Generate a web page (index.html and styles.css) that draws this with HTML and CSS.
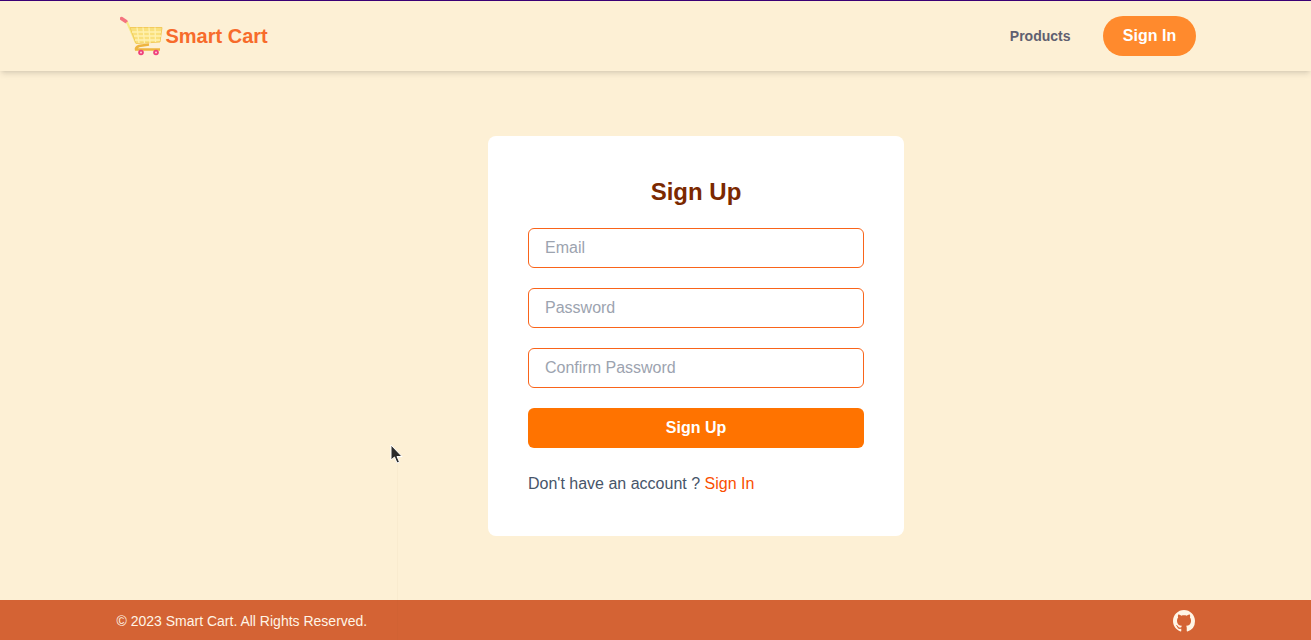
FILE: index.html
```html
<!DOCTYPE html>
<html lang="en">
<head>
    <meta charset="UTF-8">
    <title>Smart Cart</title>
    <link rel="stylesheet" href="styles.css">
</head>
<body>

    <!-- Navigation Bar -->
    <header class="navbar">
        <div class="navbar-inner">
            <a class="logo" href="#">
                <svg class="logo-icon" width="46" height="42" viewBox="0 0 46 42">
                    <path d="M1.500 3.500 L6 6.500" stroke="#f4737f" stroke-width="3.500" stroke-linecap="round"/>
                    <path d="M7 7 L16 28" stroke="#f7ec86" stroke-width="2" fill="none"/>
                    <path d="M10 12.500 L42 12.500 L40 27 L16 28.500 Z" fill="#f9e07c" stroke="#f3cb5c" stroke-width="1"/>
                    <path d="M12 17 H41 M14 21 H41 M15 25 H40 M17 12.500 L19 28 M23 12.500 L24.500 28 M29 12.500 L30 28 M35 12.500 L35.500 27" stroke="#fff1b0" stroke-width="1.300"/>
                    <path d="M29 29.500 L19 31 Q15.500 32.500 16 34.500 H40" stroke="#eeb53f" stroke-width="2.500" fill="none"/>
                    <circle cx="21" cy="37.500" r="2.800" fill="#ef3f7a"/>
                    <circle cx="36" cy="37.500" r="2.800" fill="#ef3f7a"/>
                    <circle cx="21" cy="37.500" r="1" fill="#fbd3dc"/>
                    <circle cx="36" cy="37.500" r="1" fill="#fbd3dc"/>
                </svg>
                <span>Smart Cart</span>
            </a>
            <nav class="navbar-links">
                <a class="nav-link" href="#">Products</a>
                <a class="nav-button" href="#">Sign In</a>
            </nav>
        </div>
    </header>

    <!-- Sign up card -->
    <main class="main">
        <form class="card">
            <h1>Sign Up</h1>
            <input class="field" type="email" placeholder="Email">
            <input class="field" type="password" placeholder="Password">
            <input class="field" type="password" placeholder="Confirm Password">
            <button class="submit" type="button">Sign Up</button>
            <p class="switch">Don't have an account ? <a href="#">Sign In</a></p>
        </form>
    </main>

    <footer class="footer">
        <div class="footer-inner">
            <p>© 2023 Smart Cart. All Rights Reserved.</p>
            <a class="github" href="#" aria-label="GitHub">
                <svg width="22" height="22" viewBox="0 0 16 16" fill="#fff5e6">
                    <path d="M8 0C3.580 0 0 3.580 0 8c0 3.540 2.290 6.530 5.470 7.590.4.070.55-.17.55-.38 0-.19-.01-.82-.01-1.490-2.010.37-2.530-.49-2.690-.94-.09-.23-.48-.94-.82-1.130-.28-.15-.68-.52-.01-.53.63-.01 1.080.58 1.230.82.72 1.210 1.870.87 2.330.66.070-.52.28-.87.51-1.070-1.780-.2-3.640-.89-3.640-3.950 0-.87.31-1.590.82-2.150-.08-.2-.36-1.020.08-2.120 0 0 .67-.21 2.200.82.64-.18 1.320-.27 2-.27s1.360.09 2 .27c1.530-1.040 2.200-.82 2.200-.82.44 1.100.16 1.920.08 2.120.51.560.82 1.270.82 2.150 0 3.070-1.870 3.750-3.650 3.950.29.25.54.73.54 1.480 0 1.070-.01 1.930-.01 2.200 0 .21.15.46.55.38A8.010 8.010 0 0 0 16 8c0-4.420-3.580-8-8-8z"/>
                </svg>
            </a>
        </div>
    </footer>

    <!-- Mouse pointer caught in the capture -->
    <div class="pointer-trail"></div>
    <svg class="pointer" width="14" height="22" viewBox="0 0 14 22">
        <path d="M1 1 V16 L4.500 13 L7 19 L9.500 18 L7 12.500 H12 Z" fill="#2b2b2b" stroke="#fff" stroke-width="1"/>
    </svg>

</body>
</html>
```

FILE: styles.css
```css
/* Basic Styles */
html, body {
    height: 100%;
    margin: 0;
    padding: 0;
}

body {
    display: flex;
    flex-direction: column;
    min-height: 640px;
    box-sizing: border-box;
    overflow: hidden;
    font-family: "Liberation Sans", Arial, sans-serif;
    background-color: #fdf0d5;
    color: #475569;
}

a {
    text-decoration: none;
}

/* Navigation Bar */
.navbar {
    height: 71px;
    box-sizing: border-box;
    border-top: 1px solid #3b0075;
    background-color: #fdf0d5;
    box-shadow: 0 4px 6px -1px rgba(0, 0, 0, 0.1), 0 2px 4px -2px rgba(0, 0, 0, 0.1);
    position: relative;
}

.navbar-inner {
    width: 1080px;
    height: 70px;
    margin: 0 auto;
    display: flex;
    align-items: center;
    justify-content: space-between;
}

.logo {
    display: flex;
    align-items: center;
    color: #f76b2b;
    font-size: 20px;
    font-weight: bold;
    line-height: 28px;
}

.logo-icon {
    margin-left: 4px;
}

.navbar-links {
    display: flex;
    align-items: center;
    margin-top: -1px;
}

.nav-link {
    color: #5f6070;
    font-size: 14px;
    font-weight: bold;
    margin-right: 32px;
    margin-left: 1px;
}

.nav-button {
    width: 93px;
    height: 40px;
    padding-left: 1px;
    box-sizing: border-box;
    border-radius: 20px;
    background-color: #ff8a2d;
    color: #fff;
    font-size: 16px;
    font-weight: bold;
    line-height: 40px;
    text-align: center;
}

/* Sign up card */
.main {
    flex: 1;
    display: flex;
    justify-content: center;
    align-items: center;
    padding-left: 81px;
}

.card {
    width: 416px;
    height: 400px;
    box-sizing: border-box;
    padding: 40px;
    background-color: #fff;
    border-radius: 8px;
    display: flex;
    flex-direction: column;
    margin-top: 1px;
}

.card h1 {
    margin: 0 0 20px;
    color: #7b2900;
    font-size: 24px;
    line-height: 32px;
    text-align: center;
}

.field {
    height: 40px;
    box-sizing: border-box;
    margin-bottom: 20px;
    padding: 0 16px;
    border: 1px solid #f9641a;
    border-radius: 6px;
    outline: none;
    font-family: inherit;
    font-size: 16px;
}

.field::placeholder {
    color: #9ca3af;
    opacity: 1;
}

.submit {
    height: 40px;
    border: none;
    border-radius: 6px;
    background-color: #ff7300;
    color: #fff;
    cursor: pointer;
    font-family: inherit;
    font-size: 16px;
    font-weight: bold;
}

.switch {
    margin: 24px 0 0;
    font-size: 16px;
    line-height: 24px;
}

.switch a {
    color: #fa5000;
}

/* Footer */
.footer {
    height: 40px;
    background-color: #d46334;
    color: #fff5e6;
}

.footer-inner {
    width: 1080px;
    height: 40px;
    margin: 0 auto;
    padding-left: 1px;
    box-sizing: border-box;
    display: flex;
    align-items: center;
    justify-content: space-between;
}

.footer p {
    margin: 1px 0 0;
    font-size: 14px;
}

.github {
    display: flex;
    margin-top: 1px;
    margin-right: 1px;
}

/* Pointer overlay */
.pointer {
    position: absolute;
    left: 390px;
    top: 444px;
}

.pointer-trail {
    position: absolute;
    left: 397px;
    top: 462px;
    width: 1px;
    height: 178px;
    background-color: rgba(120, 90, 40, 0.03);
}
```
